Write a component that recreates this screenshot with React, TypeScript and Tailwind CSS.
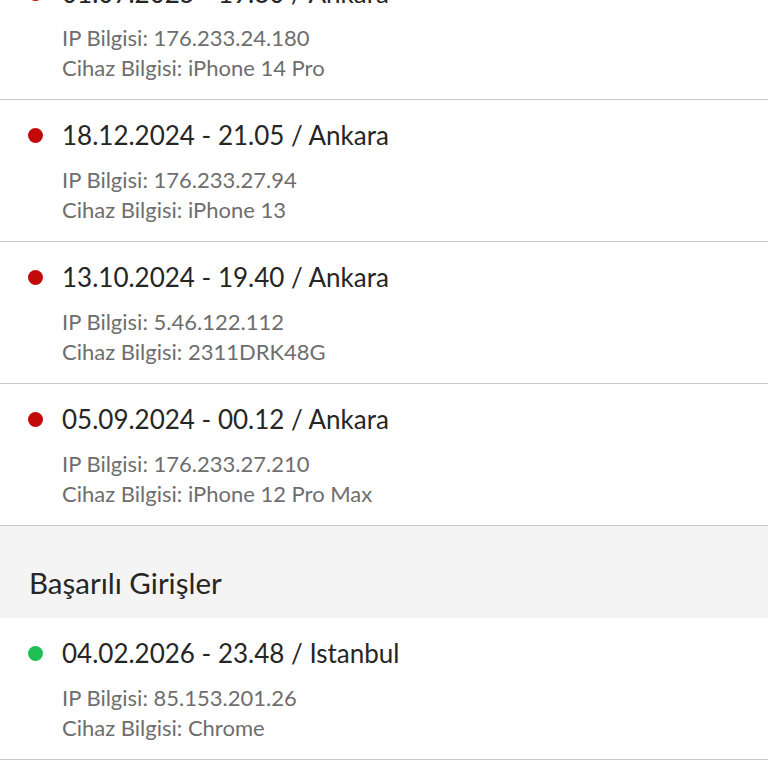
type Login = {
  date: string
  ip: string
  device: string
}

const failed: Login[] = [
  { date: '01.07.2025 - 19.30 / Ankara', ip: '176.233.24.180', device: 'iPhone 14 Pro' },
  { date: '18.12.2024 - 21.05 / Ankara', ip: '176.233.27.94', device: 'iPhone 13' },
  { date: '13.10.2024 - 19.40 / Ankara', ip: '5.46.122.112', device: '2311DRK48G' },
  { date: '05.09.2024 - 00.12 / Ankara', ip: '176.233.27.210', device: 'iPhone 12 Pro Max' },
]

const success: Login[] = [
  { date: '04.02.2026 - 23.48 / Istanbul', ip: '85.153.201.26', device: 'Chrome' },
]

function LoginRow({ item, ok }: { item: Login; ok?: boolean }) {
  return (
    <div className="border-b border-[#c8c8c8] pt-[19px] pb-[16px] pl-[28px]">
      <div className="flex items-center h-[32px]">
        <span
          className={
            ok
              ? 'w-[15px] h-[15px] rounded-full bg-[#1fbf55] shrink-0'
              : 'w-[15px] h-[15px] rounded-full bg-[#c20a0a] shrink-0'
          }
        />
        <span className="ml-[19px] text-[26px] leading-[32px] text-[#262626]">{item.date}</span>
      </div>
      <div className="mt-[14px] pl-[34px] text-[22px] leading-[30px] text-[#6e6e6e]">
        <p>IP Bilgisi: {item.ip}</p>
        <p>Cihaz Bilgisi: {item.device}</p>
      </div>
    </div>
  )
}

export default function App() {
  return (
    <div className="w-[768px] h-[768px] overflow-hidden bg-white font-['Lato','Liberation_Sans',sans-serif]">
      <div className="-mt-[42px]">
        {failed.map((item) => (
          <LoginRow key={item.date} item={item} />
        ))}

        {/* Section header */}
        <div className="bg-[#f4f4f4] h-[92px] flex items-end pb-[17px] pl-[29px]">
          <h2 className="text-[29.5px] leading-[36px] text-[#262626]">Başarılı Girişler</h2>
        </div>

        {success.map((item) => (
          <LoginRow key={item.date} item={item} ok />
        ))}
      </div>
    </div>
  )
}
